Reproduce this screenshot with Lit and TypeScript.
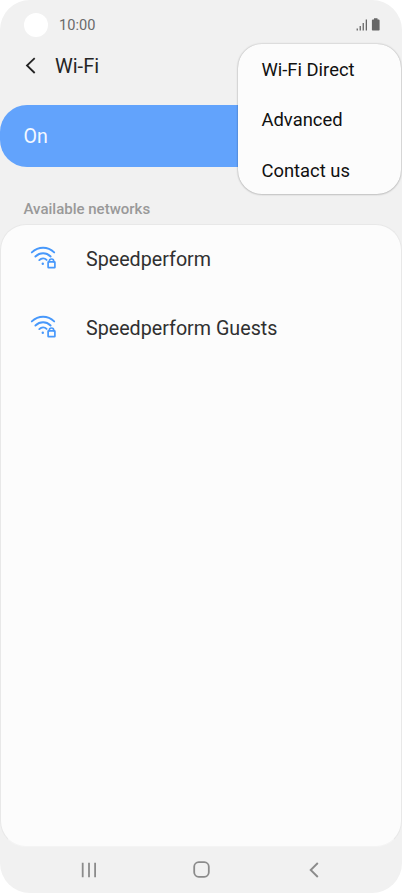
import { LitElement, html, css } from "lit";
import { customElement } from "lit/decorators.js";

@customElement("wifi-icon")
class WifiIcon extends LitElement {
  static styles = css`
    :host { display: block; width: 28px; height: 24px; }
    svg { display: block; }
  `;
  render() {
    return html`<svg width="28" height="24" viewBox="0 0 28 24" fill="none" stroke="#4798fb" stroke-width="1.9" stroke-linecap="round">
      <path d="M1.8 6.4C8.5 .1 17.7 .1 24.2 6.4" />
      <path d="M5.4 10.5C10 6.2 16.2 6.2 20.6 10.5" />
      <path d="M9.3 14.1C11.5 12 14.6 12 16.6 13.9" />
      <circle cx="12.8" cy="17.8" r="1.2" fill="#4798fb" stroke="none" />
      <path d="M19.3 15.6V15.3a2.2 2.3 0 0 1 4.4 0V15.6" stroke-width="1.7" />
      <rect x="18.1" y="15.9" width="6.8" height="5.8" rx=".5" stroke-width="1.7" />
    </svg>`;
  }
}

@customElement("app-root")
class AppRoot extends LitElement {
  static styles = css`
    :host {
      display: block;
      width: 402px;
      height: 893px;
      background: #fff;
      font-family: Roboto, "Liberation Sans", sans-serif;
    }
    * { box-sizing: border-box; }
    svg { display: block; }
    .phone {
      position: relative;
      display: flex;
      flex-direction: column;
      height: 893px;
      overflow: hidden;
      border-radius: 30px;
      background: #f1f1f1;
    }
    .status {
      display: flex;
      align-items: center;
      height: 43px;
      padding: 7px 21px 0 24px;
    }
    .camera { width: 24px; height: 24px; border-radius: 50%; background: #fff; }
    .time { flex: 1; margin-left: 11px; font-size: 14.6px; color: #6a6a6a; }
    .header {
      display: flex;
      align-items: center;
      height: 61.5px;
      padding: 0 0 15px 25px;
    }
    .title { margin-left: 18px; font-size: 20px; color: #252525; }
    .toggle {
      display: flex;
      align-items: center;
      height: 62.3px;
      margin-right: 2px;
      padding: 1px 0 0 23.5px;
      border-radius: 27px;
      background: #62a3fc;
      color: #f4f8ff;
      font-size: 19.6px;
    }
    .section {
      display: flex;
      align-items: flex-end;
      height: 57px;
      padding: 0 0 6px 23.5px;
      font-size: 15px;
      font-weight: 500;
      color: #999;
    }
    .card {
      flex: 1;
      border: 1px solid #e8e8e8;
      border-bottom-color: #f4f4f4;
      border-radius: 26px;
      background: #fcfcfc;
    }
    .row {
      display: flex;
      align-items: center;
      height: 69px;
      padding: 0 0 3px 28.5px;
      font-size: 19.7px;
      color: #303030;
    }
    .name { margin-left: 28.5px; padding-top: 4px; }
    .nav {
      display: grid;
      grid-template-columns: repeat(3, 112.5px);
      justify-content: center;
      justify-items: center;
      align-items: center;
      height: 46.5px;
    }
    .menu {
      position: absolute;
      left: 238.2px;
      top: 43.5px;
      width: 163.3px;
      height: 150px;
      padding: 1px 0 0 23.3px;
      border-radius: 24px;
      background: #fcfcfc;
      box-shadow: 0 0 2px rgba(0, 0, 0, 0.3), 0 1px 2px rgba(0, 0, 0, 0.12);
      color: #101010;
      font-size: 18.4px;
    }
    .item { display: flex; align-items: center; height: 50.3px; }
  `;
  render() {
    return html`<div class="phone">
      <div class="status">
        <div class="camera"></div>
        <div class="time">10:00</div>
        <svg width="25" height="14" viewBox="0 0 25 14" fill="#666">
          <path d="M.6 10.5h1.300V12.500H.6zM3.600 8h1.300v4.500h-1.300zM6.600 5h1.300v7.500h-1.300zM9.700 1.500h1.300v11H9.700zM18 .3h3.500v1.200h1.5l.6.8v9.6l-.6.6h-6.500l-.6-.6V2.300l.6-.8H18z" />
        </svg>
      </div>
      <div class="header">
        <svg width="12" height="18" viewBox="0 0 12 18" fill="none" stroke="#252525" stroke-width="1.8">
          <path d="M9.7 1.200L2 8.500l7.700 7.500" />
        </svg>
        <div class="title">Wi-Fi</div>
      </div>
      <div class="toggle">On</div>
      <div class="section">Available networks</div>
      <div class="card">
        ${["Speedperform", "Speedperform Guests"].map(
          (n) => html`<div class="row"><wifi-icon></wifi-icon><div class="name">${n}</div></div>`
        )}
      </div>
      <div class="nav">
        <svg width="16" height="16" viewBox="0 0 16 16" fill="#8b8b8b">
          <path d="M.8 .8h1.800v14.400H.8zM7.100 .8h1.800v14.400H7.100zM13.200 .8h1.800v14.400h-1.800z" />
        </svg>
        <svg width="17" height="17" viewBox="0 0 17 17" fill="none" stroke="#8b8b8b" stroke-width="1.800">
          <rect x="1.200" y="1.200" width="14.600" height="14.600" rx="4.500" />
        </svg>
        <svg width="10" height="16" viewBox="0 0 10 16" fill="none" stroke="#8b8b8b" stroke-width="1.900">
          <path d="M8.800 1L1.700 8l7.100 7" />
        </svg>
      </div>
      <div class="menu">
        ${["Wi-Fi Direct", "Advanced", "Contact us"].map((t) => html`<div class="item">${t}</div>`)}
      </div>
    </div>`;
  }
}
